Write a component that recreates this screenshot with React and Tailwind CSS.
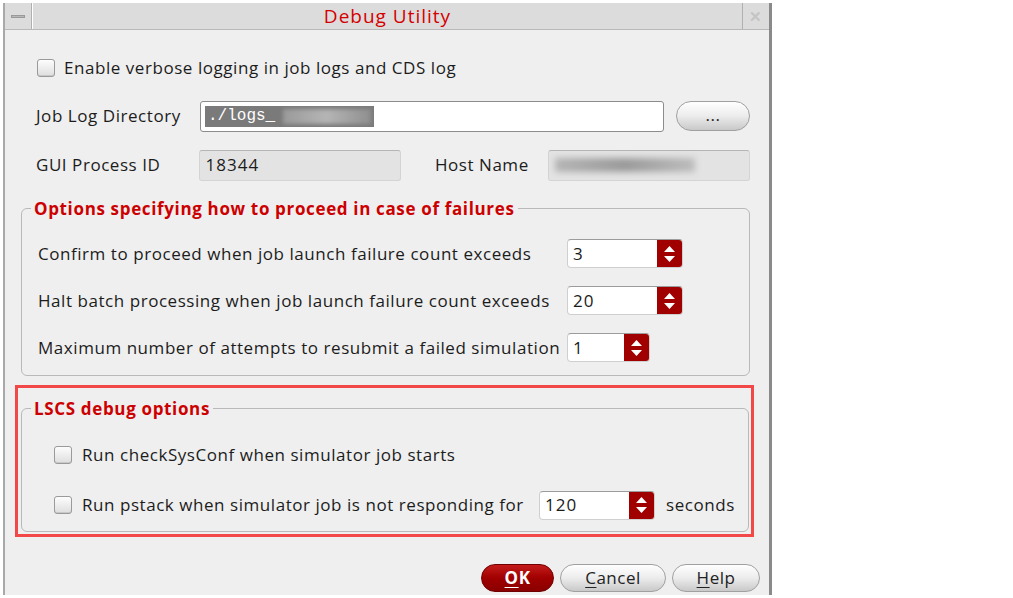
import React from 'react';

function CheckBox() {
  return (
    <span className="inline-block shrink-0 w-[18px] h-[18px] rounded-[3px] border border-[#9a9a9a] bg-gradient-to-b from-[#fdfdfd] to-[#dedede] shadow-[inset_0_-1px_0_#c8c8c8]" />
  );
}

function Spin({ value, width = 'w-[116px]' }) {
  return (
    <div className={`flex h-[29px] ${width} rounded-[4px] border border-[#cfcfcf] border-t-[#9c9c9c] bg-white overflow-hidden`}>
      <div className="flex-1 flex items-center pl-[5px] text-[17px] tracking-[1px] text-[#1a1a1a]">{value}</div>
      <div className="w-[25px] bg-[#a00000] flex flex-col items-center justify-center gap-[4px]">
        <svg width="11" height="6" viewBox="0 0 11 6"><path d="M0 6 L5.5 0 L11 6 Z" fill="#fff" /></svg>
        <svg width="11" height="6" viewBox="0 0 11 6"><path d="M0 0 L5.5 6 L11 0 Z" fill="#fff" /></svg>
      </div>
    </div>
  );
}

function PillButton({ children, className = '' }) {
  return (
    <button className={`h-[28px] rounded-full border border-[#a0a0a0] bg-gradient-to-b from-[#ffffff] via-[#ececec] to-[#c9c9c9] text-[17px] tracking-[0.5px] text-[#222] ${className}`}>
      {children}
    </button>
  );
}

export default function App() {
  return (
    <div className="w-[1013px] h-[598px] bg-white font-['Open_Sans',sans-serif] text-[#1c1c1c] text-[17px] tracking-[0.55px]">
      <div className="ml-[3px] mt-[3px] w-[769px] h-[592px] bg-[#efefef] border-l-2 border-[#a9a9a9] border-r-[3px] border-r-[#8a8a8a] flex flex-col">
        {/* title bar */}
        <div className="h-[27px] flex bg-[#dcdcdc] border-b border-[#b9b9b9]">
          <div className="w-[27px] border-r border-[#b0b0b0] flex items-center justify-center">
            <span className="block w-[14px] h-[3px] bg-[#b8b8b8] border border-[#999]" />
          </div>
          <div className="flex-1 flex items-center justify-center text-[#d40000] text-[19px] tracking-[1px] border-l border-white">Debug Utility</div>
          <div className="w-[27px] border-l border-[#b0b0b0] flex items-center justify-center text-[#c4c4c4] text-[15px] font-bold">✕</div>
        </div>

        <div className="flex-1 flex flex-col pl-[16px] pr-[19px]">
          <div className="flex items-center gap-[9px] mt-[25px] pl-[16px]">
            <CheckBox />
            <span>Enable verbose logging in job logs and CDS log</span>
          </div>

          <div className="flex items-center mt-[20px] pl-[15px]">
            <span className="w-[164px]">Job Log Directory</span>
            <div className="w-[464px] h-[31px] rounded-[3px] border border-[#8c8c8c] bg-white flex items-center pl-[4px]">
              <div className="relative h-[21px] w-[169px] bg-[#7a7a7a] flex items-center overflow-hidden">
                <span className="pl-[3px] font-['Liberation_Mono',monospace] text-[16px] tracking-normal text-white">./logs_</span>
                <span className="absolute left-[78px] top-[3px] w-[88px] h-[15px] bg-gradient-to-r from-[#9a9a9a] via-[#b5b5b5] to-[#8f8f8f] blur-[2px]" />
              </div>
            </div>
            <PillButton className="ml-[12px] w-[74px] h-[30px] text-[14px] pb-[4px]">...</PillButton>
          </div>

          <div className="flex items-center mt-[18px] pl-[15px]">
            <span className="w-[163px]">GUI Process ID</span>
            <div className="w-[203px] h-[31px] rounded-[3px] border border-[#d4d4d4] border-t-[#b5b5b5] bg-[#e3e3e3] flex items-center pl-[6px] tracking-[1px]">18344</div>
            <span className="ml-[34px] w-[113px]">Host Name</span>
            <div className="relative w-[203px] h-[31px] rounded-[3px] border border-[#d4d4d4] border-t-[#b5b5b5] bg-[#e3e3e3]">
              <span className="absolute left-[6px] top-[7px] w-[140px] h-[14px] bg-gradient-to-r from-[#b5b5b5] via-[#9a9a9a] to-[#bdbdbd] blur-[3px]" />
            </div>
          </div>

          <fieldset className="mt-[15px] border border-[#b9b9b9] rounded-[6px] h-[180px]">
            <legend className="ml-[9px] px-[3px] text-[#cc0000] font-bold tracking-[0.65px]">Options specifying how to proceed in case of failures</legend>
            <div className="pl-[16px] flex flex-col">
              <div className="flex items-center mt-[18px]">
                <span className="w-[529px]">Confirm to proceed when job launch failure count exceeds</span>
                <Spin value="3" />
              </div>
              <div className="flex items-center mt-[18px]">
                <span className="w-[529px]">Halt batch processing when job launch failure count exceeds</span>
                <Spin value="20" />
              </div>
              <div className="flex items-center mt-[18px]">
                <span className="w-[529px] whitespace-nowrap">Maximum number of attempts to resubmit a failed simulation</span>
                <Spin value="1" width="w-[83px]" />
              </div>
            </div>
          </fieldset>

          <div className="mt-[9px] -ml-[6px] -mr-[4px] border-[3px] border-[#f24848] pl-[3px] pr-[2px] pt-[8px] pb-[2px]">
            <fieldset className="border border-[#b9b9b9] rounded-[6px] h-[136px]">
              <legend className="ml-[9px] px-[3px] text-[#cc0000] font-bold tracking-[0.65px]">LSCS debug options</legend>
              <div className="pl-[32px] flex flex-col">
                <div className="flex items-center gap-[10px] mt-[21px]">
                  <CheckBox />
                  <span>Run checkSysConf when simulator job starts</span>
                </div>
                <div className="flex items-center mt-[23px]">
                  <CheckBox />
                  <span className="ml-[10px] w-[457px] whitespace-nowrap">Run pstack when simulator job is not responding for</span>
                  <Spin value="120" />
                  <span className="ml-[11px]">seconds</span>
                </div>
              </div>
            </fieldset>
          </div>

          <div className="flex justify-end gap-[6px] mt-[27px] -mr-[10px]">
            <button className="w-[73px] h-[28px] rounded-full border border-[#700000] bg-gradient-to-b from-[#c41a1a] via-[#a00000] to-[#8a0000] text-white font-bold text-[17px]">
              <span className="underline underline-offset-[3px]">O</span>K
            </button>
            <PillButton className="w-[106px]"><span className="underline underline-offset-[3px]">C</span>ancel</PillButton>
            <PillButton className="w-[88px]"><span className="underline underline-offset-[3px]">H</span>elp</PillButton>
          </div>
        </div>
      </div>
    </div>
  );
}
